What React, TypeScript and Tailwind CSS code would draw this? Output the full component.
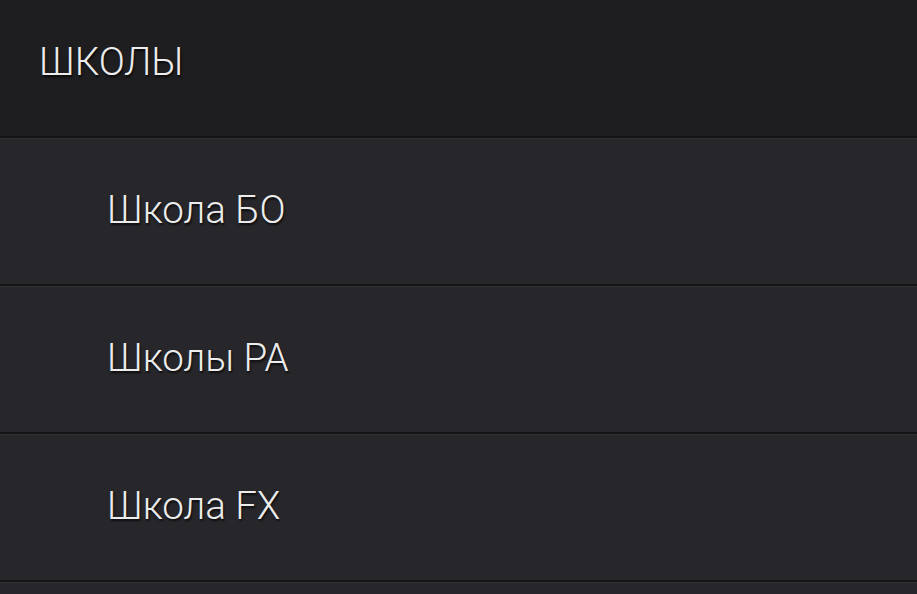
const schools = ['Школа БО', 'Школы РА', 'Школа FX'];

function SchoolRow({ name }: { name: string }) {
  return (
    <div className="border-t-2 border-[#141416]">
      <div className="flex h-[146px] items-center border-t border-[#303034] bg-[#27272b] pb-[3px] pl-[107px]">
        <span className="text-[38.5px] font-light text-[#ececec] [text-shadow:1px_2px_2px_rgba(0,0,0,0.7)]">
          {name}
        </span>
      </div>
    </div>
  );
}

export default function App() {
  return (
    <div className="h-[594px] w-full overflow-hidden bg-[#27272b] font-['Roboto',sans-serif]">
      {/* Header */}
      <div className="flex h-[136px] items-center bg-[#1e1e20] pb-[12px] pl-[39px]">
        <h1 className="text-[38.5px] font-light text-[#ececec] [text-shadow:1px_2px_2px_rgba(0,0,0,0.7)]">
          ШКОЛЫ
        </h1>
      </div>

      {schools.map((s) => (
        <SchoolRow key={s} name={s} />
      ))}
      <div className="border-t-2 border-[#141416]">
        <div className="h-[20px] border-t border-[#303034] bg-[#27272b]" />
      </div>
    </div>
  );
}
